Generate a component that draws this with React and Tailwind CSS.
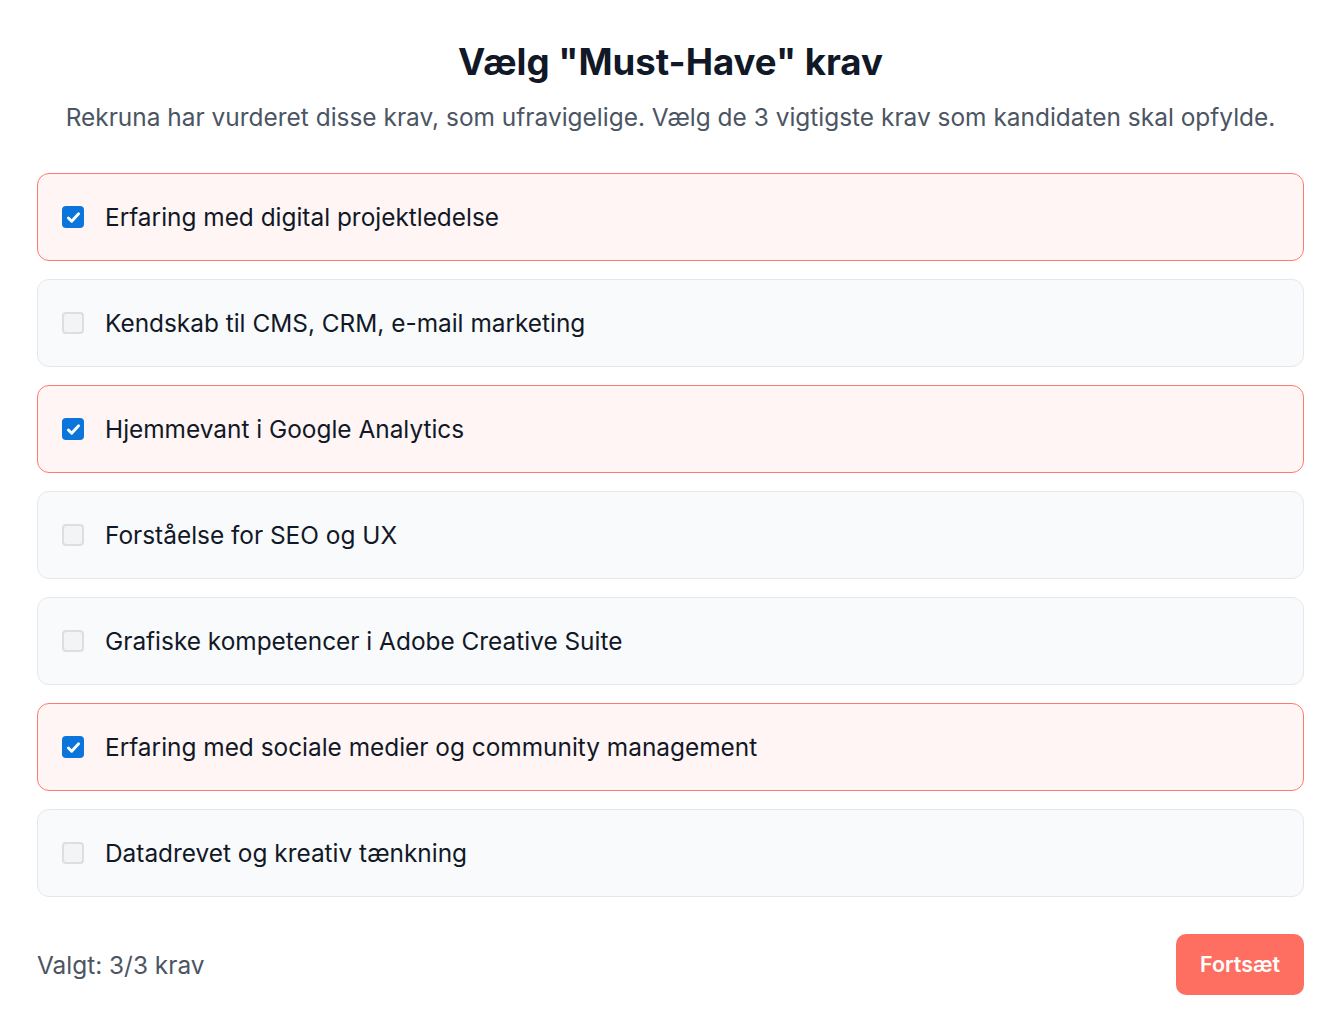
import React, { useState } from "react";

const items = [
  "Erfaring med digital projektledelse",
  "Kendskab til CMS, CRM, e-mail marketing",
  "Hjemmevant i Google Analytics",
  "Forståelse for SEO og UX",
  "Grafiske kompetencer i Adobe Creative Suite",
  "Erfaring med sociale medier og community management",
  "Datadrevet og kreativ tænkning",
];

function Box({ checked }) {
  if (checked) {
    return (
      <span className="flex h-[22px] w-[22px] shrink-0 items-center justify-center rounded-[4px] bg-[#0b75db]">
        <svg viewBox="0 0 16 16" className="h-[17px] w-[17px]" fill="none">
          <path
            d="M3.2 8.4l3.1 3.1 6.5-7"
            stroke="white"
            strokeWidth="2.7"
            strokeLinecap="round"
            strokeLinejoin="round"
          />
        </svg>
      </span>
    );
  }
  return (
    <span className="h-[22px] w-[22px] shrink-0 rounded-[4px] border-2 border-[#dcdee2] bg-[#f3f4f6]" />
  );
}

export default function App() {
  const [selected, setSelected] = useState([0, 2, 5]);

  const toggle = (i) => {
    if (selected.includes(i)) {
      setSelected(selected.filter((s) => s !== i));
    } else if (selected.length < 3) {
      setSelected([...selected, i]);
    }
  };

  return (
    <div className="min-h-screen bg-white font-['Inter',sans-serif]">
      <div className="pl-[37px] pr-[38px] pt-[42px]">
        <h1 className="text-center text-[36.6px] font-bold leading-[40px] text-[#111827]">
          Vælg "Must-Have" krav
        </h1>
        <p className="mt-[19px] text-center text-[24.45px] leading-[32px] text-[#4b5563]">
          Rekruna har vurderet disse krav, som ufravigelige. Vælg de 3 vigtigste krav som kandidaten skal opfylde.
        </p>

        {/* krav liste */}
        <div className="mt-[40px] flex flex-col gap-[18px]">
          {items.map((text, i) => {
            const on = selected.includes(i);
            return (
              <button
                key={i}
                onClick={() => toggle(i)}
                className={
                  on
                    ? "flex h-[88px] items-center gap-[21px] rounded-[12px] border border-[#ff7a6e] bg-[#fff5f4] px-[24px] text-left"
                    : "flex h-[88px] items-center gap-[21px] rounded-[12px] border border-[#e5e7eb] bg-[#f9fafb] px-[24px] text-left"
                }
              >
                <Box checked={on} />
                <span className="text-[24.4px] leading-[32px] text-[#111827]">{text}</span>
              </button>
            );
          })}
        </div>

        <div className="mt-[37px] flex items-center justify-between">
          <span className="text-[24.4px] leading-[32px] text-[#4b5563]">
            Valgt: {selected.length}/3 krav
          </span>
          <button className="h-[61px] w-[128px] rounded-[10px] bg-[#ff6f61] text-[21.4px] font-semibold text-white">
            Fortsæt
          </button>
        </div>
      </div>
    </div>
  );
}
